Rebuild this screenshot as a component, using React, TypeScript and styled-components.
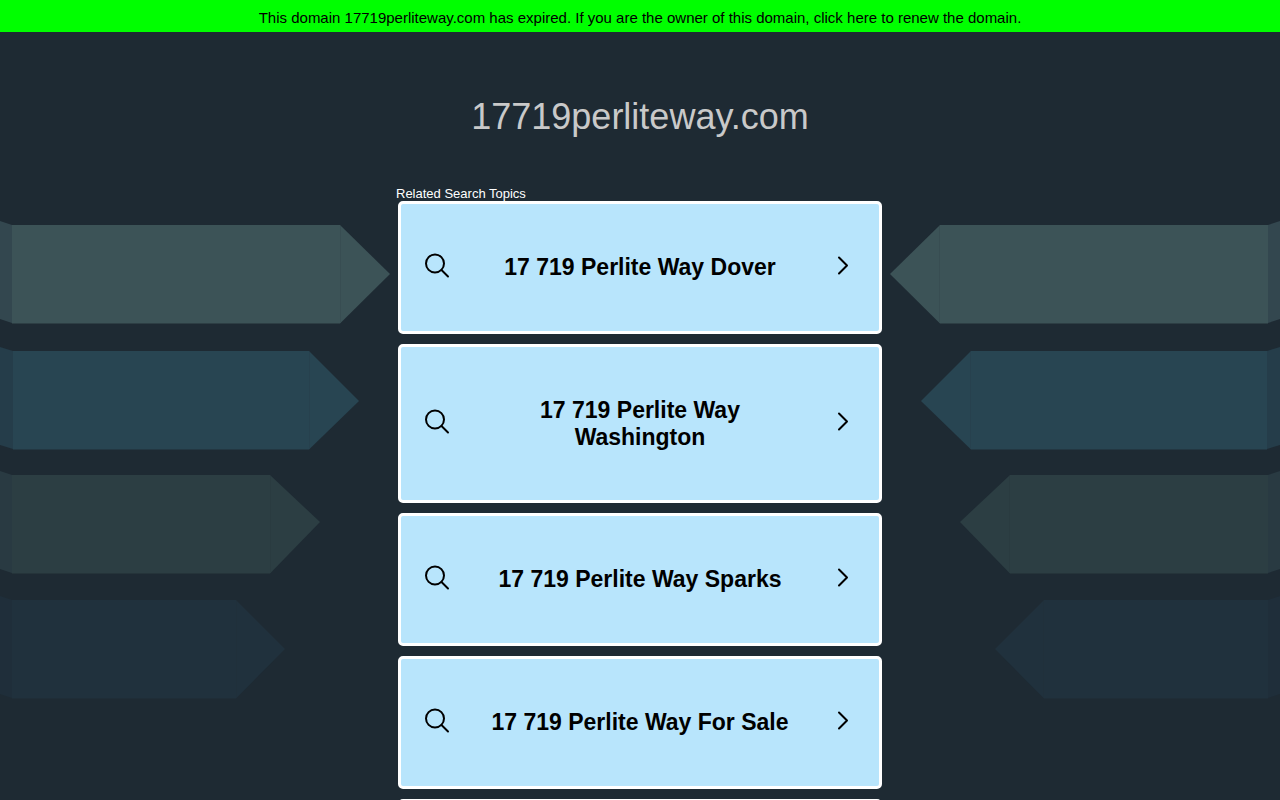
import React from "react";
import styled, { createGlobalStyle } from "styled-components";

const GlobalStyle = createGlobalStyle`
  *, *::before, *::after { box-sizing: border-box; }
  body {
    margin: 0;
    background: #1e2a33;
    font-family: "Liberation Sans", Arial, Helvetica, sans-serif;
  }
`;

const Page = styled.div`
  min-height: 100vh;
  overflow: hidden;
`;

const Banner = styled.a`
  display: block;
  padding: 9px 16px 6px;
  background: #00ff00;
  color: #000;
  font-size: 15px;
  line-height: 17px;
  text-align: center;
  text-decoration: none;
`;

const Content = styled.div`
  display: grid;
  grid-template-columns: minmax(0, 1fr) minmax(0, 488px) minmax(0, 1fr);
`;

const Side = styled.div<{ $end?: boolean }>`
  display: flex;
  justify-content: ${(p) => (p.$end ? "flex-end" : "flex-start")};
  padding-top: 184px;
  overflow: hidden;
`;

const Ribbons = styled.svg<{ $mirrored?: boolean }>`
  flex: none;
  align-self: flex-start;
  width: 392px;
  height: 488px;
  transform: ${(p) => (p.$mirrored ? "scaleX(-1)" : "none")};
`;

const Main = styled.main`
  display: flex;
  flex-direction: column;
`;

const DomainName = styled.h1`
  margin: 64px 0 49px;
  color: #c9c9c9;
  font-size: 36px;
  font-weight: 400;
  line-height: 41px;
  text-align: center;
`;

const ListLabel = styled.h2`
  margin: 0;
  color: #fff;
  font-size: 13px;
  font-weight: 400;
  line-height: 15px;
`;

const TopicList = styled.ul`
  display: flex;
  flex-direction: column;
  gap: 10px;
  margin: 0;
  padding: 0 2px;
  list-style: none;
`;

const TopicLink = styled.a`
  display: flex;
  align-items: center;
  justify-content: space-between;
  min-height: 133px;
  padding: 50px 20px 49px;
  border: 3px solid #fff;
  border-radius: 5px;
  background: #b8e5fc;
  color: #000;
  font-size: 23px;
  font-weight: 700;
  line-height: 27px;
  text-align: center;
  text-decoration: none;
`;

const TopicText = styled.span`
  flex: 0 1 312px;
  align-self: flex-start;
`;

const Icon = styled.svg`
  flex: none;
  width: 32px;
  height: 26px;
  overflow: visible;
  fill: none;
  stroke: #000;
  stroke-width: 2;
  stroke-linecap: round;
  stroke-linejoin: round;
`;

const ribbons = [
  { top: 9, fold: 12, shoulder: 340, tip: 390, mid: 58, fill: "#3c5357", foldFill: "#33474f" },
  { top: 135, fold: 13, shoulder: 309, tip: 359, mid: 185, fill: "#284552", foldFill: "#253d4a" },
  { top: 259, fold: 12, shoulder: 270, tip: 320, mid: 306, fill: "#2c3e43", foldFill: "#293a42" },
  { top: 384, fold: 12, shoulder: 236, tip: 285, mid: 433, fill: "#20313d", foldFill: "#1f2e3a" },
];

function RibbonArt({ mirrored }: { mirrored?: boolean }) {
  return (
    <Ribbons viewBox="0 0 392 488" $mirrored={mirrored} aria-hidden="true">
      {ribbons.map(({ top, fold, shoulder, tip, mid, fill, foldFill }) => (
        <g key={top}>
          <path d={`M0 ${top - 4}L${fold} ${top}V${top + 98}L0 ${top + 94}Z`} fill={foldFill} />
          <path d={`M${fold} ${top}H${shoulder}L${tip} ${mid}L${shoulder} ${top + 98.5}H${fold}Z`} fill={fill} />
          <path d={`M${shoulder + 0.5} ${top + 1}V${top + 97}`} stroke="#1e2a33" strokeOpacity="0.12" />
        </g>
      ))}
    </Ribbons>
  );
}

const topics = [
  "17 719 Perlite Way Dover",
  "17 719 Perlite Way Washington",
  "17 719 Perlite Way Sparks",
  "17 719 Perlite Way For Sale",
];

function Topic({ text }: { text?: string }) {
  return (
    <li>
      <TopicLink href="#">
        <Icon viewBox="0 0 32 26" aria-hidden="true">
          <circle cx="14" cy="8.5" r="9" />
          <path d="M20.5 15L27 21.5" />
        </Icon>
        <TopicText>{text}</TopicText>
        <Icon viewBox="0 0 32 26" aria-hidden="true">
          <path d="M12 2.5L20 10.5L12 18.5" />
        </Icon>
      </TopicLink>
    </li>
  );
}

export default function App() {
  return (
    <>
      <GlobalStyle />
      <Page>
        <Banner href="#">
          This domain 17719perliteway.com has expired. If you are the owner of this domain, click here to renew the domain.
        </Banner>
        <Content>
          <Side>
            <RibbonArt />
          </Side>
          <Main>
            <DomainName>17719perliteway.com</DomainName>
            <ListLabel>Related Search Topics</ListLabel>
            <TopicList>
              {topics.map((text) => (
                <Topic key={text} text={text} />
              ))}
              <Topic />
            </TopicList>
          </Main>
          <Side $end>
            <RibbonArt mirrored />
          </Side>
        </Content>
      </Page>
    </>
  );
}
